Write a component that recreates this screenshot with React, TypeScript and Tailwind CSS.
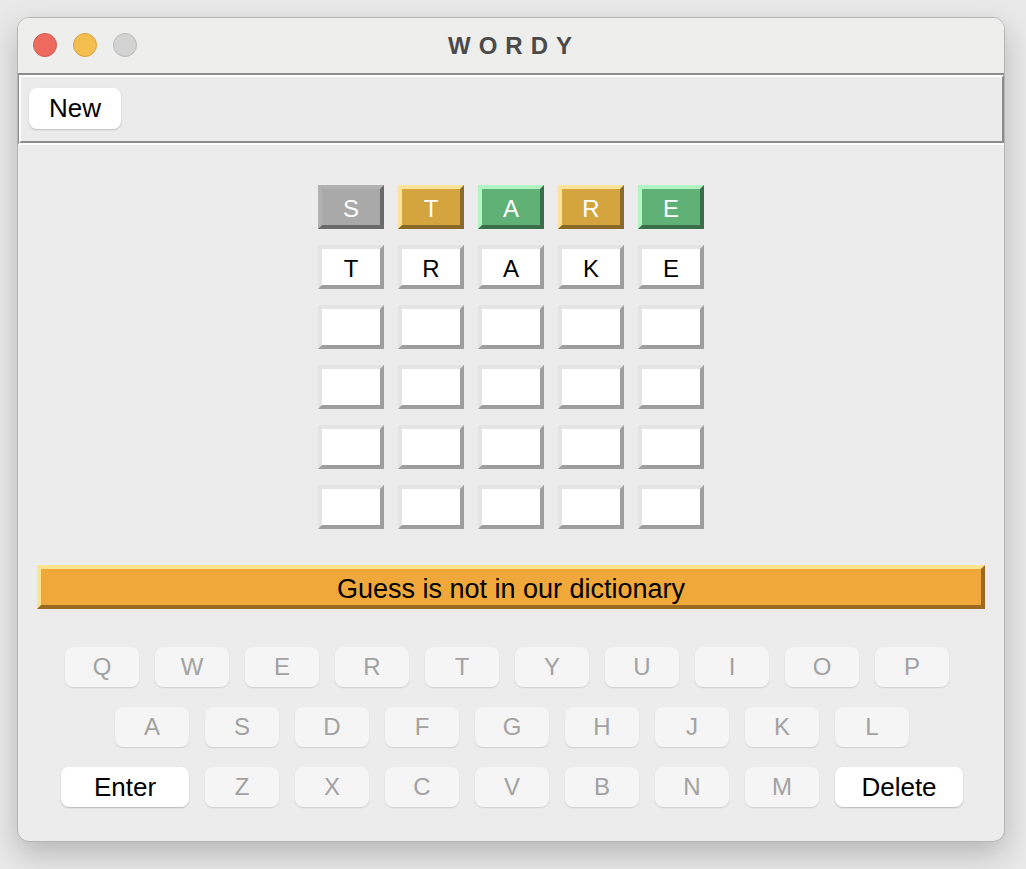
import React from "react";

type TileKind = "gray" | "yellow" | "green" | "white";

const tileClass: Record<TileKind, string> = {
  gray: "bg-[#a9a9a9] text-white border-t-[#b2b2b2] border-l-[#b2b2b2] border-r-[#6a6a6a] border-b-[#6a6a6a]",
  yellow: "bg-[#d4a53f] text-white border-t-[#fbe49a] border-l-[#fbe49a] border-r-[#8a6a28] border-b-[#8a6a28]",
  green: "bg-[#5fb176] text-white border-t-[#b2f5c2] border-l-[#b2f5c2] border-r-[#3c6e4b] border-b-[#3c6e4b]",
  white: "bg-white text-black border-t-[#e4e4e4] border-l-[#e4e4e4] border-r-[#9d9d9d] border-b-[#9d9d9d]",
};

const rows: { ch: string; kind: TileKind }[][] = [
  [
    { ch: "S", kind: "gray" },
    { ch: "T", kind: "yellow" },
    { ch: "A", kind: "green" },
    { ch: "R", kind: "yellow" },
    { ch: "E", kind: "green" },
  ],
  ["T", "R", "A", "K", "E"].map((c) => ({ ch: c, kind: "white" as TileKind })),
  ...Array.from({ length: 4 }, () =>
    Array.from({ length: 5 }, () => ({ ch: "", kind: "white" as TileKind }))
  ),
];

const font = { fontFamily: '"Liberation Sans", Arial, sans-serif' };

function Key({ label, wide }: { label: string; wide?: boolean }) {
  return (
    <div
      className={
        wide
          ? "w-[128px] h-[40px] rounded-[8px] bg-white text-black flex items-center justify-center text-[26px] shadow-[0_1px_1.5px_rgba(0,0,0,0.22)]"
          : "w-[74px] h-[40px] rounded-[8px] bg-[#f5f5f5] text-[#a2a2a2] flex items-center justify-center text-[24px] shadow-[0_1px_1.5px_rgba(0,0,0,0.12)]"
      }
    >
      {label}
    </div>
  );
}

export default function App() {
  return (
    <div className="w-[1026px] h-[869px] bg-[#e9e9e9] pt-[17px] pl-[17px]" style={font}>
      <div className="w-[988px] h-[825px] rounded-[12px] border border-[#b4b4b4] bg-[#ececec] overflow-hidden flex flex-col shadow-[0_12px_30px_rgba(0,0,0,0.22)]">
        {/* title bar */}
        <div className="h-[55px] bg-[#eeeeed] relative flex items-center justify-center shrink-0">
          <div className="absolute left-[15px] top-[15px] flex gap-[16px]">
            <div className="w-[24px] h-[24px] rounded-full bg-[#ee6a5e] border border-[#d2584d]" />
            <div className="w-[24px] h-[24px] rounded-full bg-[#f5bf4f] border border-[#d7a23f]" />
            <div className="w-[24px] h-[24px] rounded-full bg-[#d3d3d3] border border-[#bababa]" />
          </div>
          <div className="text-[24px] font-bold text-[#4a4a4a] tracking-[8px] pl-[6px]">WORDY</div>
        </div>
        {/* toolbar groove */}
        <div className="h-[72px] shrink-0 border-t-2 border-l-[1px] border-t-[#8c8c8c] border-l-[#8c8c8c] border-b-2 border-r-0 border-b-white">
          <div className="h-full border-t-2 border-l-2 border-t-white border-l-white border-b-2 border-r-2 border-b-[#8c8c8c] border-r-[#8c8c8c] bg-[#ebebeb] pl-[8px] pt-[11px]">
            <div className="w-[92px] h-[41px] rounded-[8px] bg-white flex items-center justify-center text-[26px] text-black shadow-[0_1px_2px_rgba(0,0,0,0.2)]">
              New
            </div>
          </div>
        </div>
        {/* board */}
        <div className="flex flex-col items-center pt-[40px]">
          <div className="flex flex-col gap-[16px]">
            {rows.map((row, i) => (
              <div key={i} className="flex gap-[14px]">
                {row.map((t, j) => (
                  <div
                    key={j}
                    className={`w-[66px] h-[44px] border-4 flex items-center justify-center text-[24px] pt-[4px] ${tileClass[t.kind]}`}
                  >
                    {t.ch}
                  </div>
                ))}
              </div>
            ))}
          </div>
        </div>
        {/* message */}
        <div className="px-[19px] pt-[36px]">
          <div className="h-[44px] border-4 border-t-[#fbe38f] border-l-[#fbe38f] border-r-[#9a6a22] border-b-[#9a6a22] bg-[#f0a83a] flex items-center justify-center text-[27px] text-black pt-[4px]">
            Guess is not in our dictionary
          </div>
        </div>
        {/* keyboard */}
        <div className="flex flex-col items-center gap-[20px] pt-[38px] pl-[2px]">
          <div className="flex gap-[16px] pr-[10px]">
            {"QWERTYUIOP".split("").map((c) => (
              <Key key={c} label={c} />
            ))}
          </div>
          <div className="flex gap-[16px]">
            {"ASDFGHJKL".split("").map((c) => (
              <Key key={c} label={c} />
            ))}
          </div>
          <div className="flex gap-[16px]">
            <Key label="Enter" wide />
            {"ZXCVBNM".split("").map((c) => (
              <Key key={c} label={c} />
            ))}
            <Key label="Delete" wide />
          </div>
        </div>
      </div>
    </div>
  );
}
